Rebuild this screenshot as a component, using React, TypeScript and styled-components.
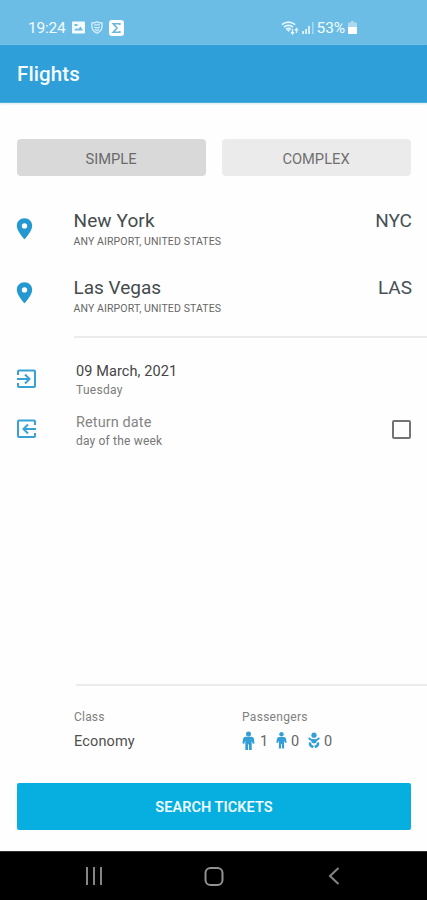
import React from 'react';
import styled, { createGlobalStyle } from 'styled-components';

const GlobalStyle = createGlobalStyle`
  * { box-sizing: border-box; }
  body { margin: 0; background: #fefefe; font-family: Roboto, sans-serif; }
  svg { display: block; flex: none; }
`;

const Screen = styled.div`
  width: 427px;
  height: 900px;
  display: flex;
  flex-direction: column;
  overflow: hidden;
  background: #fefefe;
`;

const StatusBar = styled.div`
  height: 45px;
  padding: 10px 70px 0 28px;
  display: flex;
  align-items: center;
  justify-content: space-between;
  background: #6cbde5;
  color: #f4fbff;
`;

const StatusGroup = styled.div<{ $gap: number }>`
  display: flex;
  align-items: center;
  gap: ${(p) => p.$gap}px;
`;

const Text = styled.span<{
  $size: number;
  $color?: string;
  $weight?: number;
  $spacing?: number;
  $line?: number;
}>`
  font-size: ${(p) => p.$size}px;
  font-weight: ${(p) => p.$weight ?? 400};
  color: ${(p) => p.$color ?? 'inherit'};
  letter-spacing: ${(p) => p.$spacing ?? 0}px;
  line-height: ${(p) => p.$line ?? 20}px;
  white-space: nowrap;
`;

const AppBar = styled.header`
  height: 58px;
  padding: 1px 17px 0;
  display: flex;
  align-items: center;
  background: #2e9fd8;
  color: #f5fcff;
  border-bottom: 1px solid #4fadda;
  box-shadow: 0 1px 2px #d9e6ec;
`;

const Main = styled.main`
  flex: 1;
  display: flex;
  flex-direction: column;
`;

const Tabs = styled.div`
  margin: 36px 16px 0 17px;
  height: 37px;
  display: grid;
  grid-template-columns: 1fr 1fr;
  gap: 16px;
`;

const Tab = styled.button<{ $active?: boolean }>`
  border: 0;
  border-radius: 4px;
  padding: 2px 1px 0 0;
  font-family: inherit;
  background: ${(p) => (p.$active ? '#d9d9d9' : '#ebebeb')};
  color: ${(p) => (p.$active ? '#6a6a6a' : '#707070')};
`;

const Places = styled.section`
  padding: 33px 15px 0 16px;
  display: grid;
  grid-auto-rows: 67px;
`;

const PlaceRow = styled.div`
  display: grid;
  grid-template-columns: 57.5px 1fr auto;
  align-items: start;
`;

const IconSlot = styled.div<{ $top: number }>`
  padding-top: ${(p) => p.$top}px;
`;

const Stack = styled.div`
  display: flex;
  flex-direction: column;
`;

const Divider = styled.hr<{ $top: number; $width: number }>`
  width: ${(p) => p.$width}px;
  height: 2px;
  border: 0;
  margin: ${(p) => p.$top}px 0 0 auto;
  background: #ececec;
`;

const Dates = styled.section`
  padding: 24px 16px 0 16px;
  display: grid;
  grid-auto-rows: 51px;
`;

const DateRow = styled.div`
  display: grid;
  grid-template-columns: 60px 1fr auto;
  align-items: start;
`;

const Checkbox = styled.div`
  width: 19px;
  height: 19px;
  margin-top: 7px;
  border: 2px solid #737373;
  border-radius: 2px;
`;

const Summary = styled.section`
  padding: 21px 0 0 74px;
  display: grid;
  grid-template-columns: 168px 1fr;
`;

const Counts = styled.div`
  display: flex;
  align-items: center;
  height: 30px;
`;

const Count = styled.div<{ $width: number; $gap: number }>`
  width: ${(p) => p.$width}px;
  display: flex;
  align-items: center;
  gap: ${(p) => p.$gap}px;
`;

const CountIcon = styled.div`
  margin-top: -3px;
`;

const SearchButton = styled.button`
  height: 47px;
  margin: auto 16px 21px 17px;
  padding: 2px 0 0;
  border: 0;
  border-radius: 2px;
  background: #06afdf;
  color: #effbff;
  font-family: inherit;
`;

const NavBar = styled.nav`
  height: 49px;
  border-top: 1px solid #303030;
  background: #000;
  display: grid;
  grid-template-columns: 120px 120px 120px;
  justify-content: center;
  align-items: center;
  justify-items: center;
`;

const Pin = () => (
  <svg width="17" height="22" viewBox="0 0 17 22">
    <path
      fill="#2499d1"
      fillRule="evenodd"
      d="M8.500.3C4.100.3.8 3.600.8 7.900.8 13 8.500 21.300 8.500 21.300S16.200 13 16.200 7.900C16.200 3.600 12.900.3 8.500.3Zm0 4.900a2.700 2.700 0 1 1 0 5.400 2.700 2.700 0 0 1 0-5.400Z"
    />
  </svg>
);

const Depart = () => (
  <svg width="21" height="20" viewBox="0 0 21 20" fill="none" stroke="#39a2d4" strokeWidth="2">
    <path d="M2 6V2.500Q2 1.500 3 1.500H18Q19 1.500 19 2.500V17Q19 18 18 18H3Q2 18 2 17V14" />
    <path d="M1 10H13M9 5.500L13.500 10L9 14.500" />
  </svg>
);

const Return = () => (
  <svg width="21" height="20" viewBox="0 0 21 20" fill="none" stroke="#39a2d4" strokeWidth="2">
    <path d="M19 6V2.500Q19 1.500 18 1.500H3Q2 1.500 2 2.500V17Q2 18 3 18H18Q19 18 19 17V14" />
    <path d="M20 10H8M12 5.500L7.500 10L12 14.500" />
  </svg>
);

const Adult = () => (
  <svg width="13" height="20" viewBox="0 0 13 20" fill="#32a0d6">
    <circle cx="6.500" cy="3" r="2.500" />
    <path d="M3.500 5.800h6q2 0 2.500 2.200l.5 4.500-1.800.3-1-3V19H7V13.500H6V19H3.300V9.800l-1 3-1.800-.3L1 8q.5-2.200 2.500-2.200Z" />
  </svg>
);

const Child = () => (
  <svg width="11" height="17" viewBox="0 0 11 17" fill="#32a0d6">
    <circle cx="5.500" cy="2.300" r="2.200" />
    <path d="M3 4.900h5q1.600 0 2 1.800l.7 3.800-1.600.4-1-2.500V16.500H6v-4.300H5v4.300H2.900V8.400l-1 2.500-1.600-.4L1 6.700q.4-1.800 2-1.800Z" />
  </svg>
);

const Infant = () => (
  <svg width="12" height="17" viewBox="0 0 12 17" fill="none" stroke="#32a0d6">
    <circle cx="6" cy="3.200" r="2.600" fill="#32a0d6" stroke="none" />
    <path d="M.6 6L3.800 8.200H8.200L11.400 6" strokeWidth="2" />
    <path d="M3.500 7.500H8.500V10.500L6 11.500L3.500 10.500Z" fill="#32a0d6" stroke="none" />
    <path d="M2.300 10.500Q.8 13.200 5.300 15.200M9.700 10.500Q11.200 13.200 6.700 15.200" strokeWidth="2.500" />
  </svg>
);

const PictureIcon = () => (
  <svg width="13" height="13" viewBox="0 0 13 13">
    <rect y=".5" width="13" height="12" rx="1" fill="#f4fbff" />
    <path d="M2 9.500L4.500 7L6 8.200L8.500 5.500L11 9.500Z" fill="#6cbde5" />
    <path d="M2.500 3h3v2h-3Z" fill="#6cbde5" />
  </svg>
);

const ShieldIcon = () => (
  <svg width="12" height="13" viewBox="0 0 13 14" fill="none" stroke="#d3edfa" strokeWidth="1.500">
    <path d="M1 2Q4 2 6.500.8Q9 2 12 2V6Q11.500 11 6.500 13Q1.500 11 1 6Z" />
    <path d="M3.300 4.200H9.700M3.500 6.500Q6.500 8 9.500 6.500M4.300 9L6.500 10.500L8.700 9" />
  </svg>
);

const SigmaIcon = () => (
  <svg width="15" height="16" viewBox="0 0 15 16">
    <rect width="15" height="16" rx="3" fill="#fbfeff" />
    <path d="M10.800 5V3.800H4.300L8 8L4.300 12.200H10.800V11" fill="none" stroke="#6cb5d9" strokeWidth="1.600" />
  </svg>
);

const WifiIcon = () => (
  <svg width="18" height="14" viewBox="0 0 18 14" fill="none" stroke="#e4f5fd" strokeWidth="1.700">
    <path d="M.8 3.600Q7.500-1.200 14.200 3.600M3 6Q7.500 2.700 12 6M5 8.200Q7.500 6.500 10 8.200" />
    <path d="M5.500 8.500H9.500L7.500 11Z" fill="#e4f5fd" stroke="none" />
    <path d="M11.500 8V13M10 11.200L11.500 13L13 11.200M15.500 12V7.500M14 9.300L15.500 7.500L17 9.300" strokeWidth="1.300" />
  </svg>
);

const SignalIcon = () => (
  <svg width="12" height="12" viewBox="0 0 12 12">
    <path d="M0 9h2v3H0ZM3 7h2v5H3ZM6 4h2v8H6Z" fill="#d6effb" />
    <path d="M10 0h1.500v12H10Z" fill="#a7d9f2" />
  </svg>
);

const BatteryIcon = () => (
  <svg width="9" height="13" viewBox="0 0 9 13">
    <path d="M3 0h3v1.500h2q1 0 1 1V7H0V2.500q0-1 1-1h2Z" fill="#add9ee" />
    <path d="M0 6h9v6q0 1-1 1H1q-1 0-1-1Z" fill="#fff" />
  </svg>
);

const places = [
  { city: 'New York', code: 'NYC', spacing: 0.1, pin: 9 },
  { city: 'Las Vegas', code: 'LAS', spacing: 0, pin: 6 },
];

export default function App() {
  return (
    <Screen>
      <GlobalStyle />
      <StatusBar>
        <StatusGroup $gap={6}>
          <Text $size={15.5} $spacing={-0.2}>19:24</Text>
          <PictureIcon />
          <ShieldIcon />
          <SigmaIcon />
        </StatusGroup>
        <StatusGroup $gap={3}>
          <WifiIcon />
          <SignalIcon />
          <Text $size={15.5} $spacing={-0.1}>53%</Text>
          <BatteryIcon />
        </StatusGroup>
      </StatusBar>
      <AppBar>
        <Text $size={20.5} $weight={500} $spacing={0.1} $line={26}>Flights</Text>
      </AppBar>
      <Main>
        <Tabs>
          <Tab $active><Text $size={14.7}>SIMPLE</Text></Tab>
          <Tab><Text $size={14.7}>COMPLEX</Text></Tab>
        </Tabs>
        <Places>
          {places.map((p) => (
            <PlaceRow key={p.code}>
              <IconSlot $top={p.pin}><Pin /></IconSlot>
              <Stack>
                <Text $size={19} $color="#454b4d" $spacing={p.spacing} $line={24}>{p.city}</Text>
                <Text $size={10.5} $color="#666" $spacing={0.12} $line={18}>ANY AIRPORT, UNITED STATES</Text>
              </Stack>
              <Text $size={19} $color="#465056" $line={24}>{p.code}</Text>
            </PlaceRow>
          ))}
        </Places>
        <Divider $top={-7} $width={353} />
        <Dates>
          <DateRow>
            <IconSlot $top={7}><Depart /></IconSlot>
            <Stack>
              <Text $size={14.5} $color="#454545" $spacing={0.1}>09 March, 2021</Text>
              <Text $size={12} $color="#7c7c7c" $spacing={0.3} $line={16}>Tuesday</Text>
            </Stack>
          </DateRow>
          <DateRow>
            <IconSlot $top={6}><Return /></IconSlot>
            <Stack>
              <Text $size={14.5} $color="#858585" $spacing={0.1}>Return date</Text>
              <Text $size={12} $color="#777" $spacing={0.18} $line={16}>day of the week</Text>
            </Stack>
            <Checkbox />
          </DateRow>
        </Dates>
        <Divider $top={220} $width={351} />
        <Summary>
          <Stack>
            <Text $size={12} $color="#808080" $spacing={0.2}>Class</Text>
            <Text $size={14.5} $color="#505050" $spacing={0.15} $line={30}>Economy</Text>
          </Stack>
          <Stack>
            <Text $size={12} $color="#808080" $spacing={0.3}>Passengers</Text>
            <Counts>
              <Count $width={34} $gap={5}><CountIcon><Adult /></CountIcon><Text $size={14.5} $color="#666">1</Text></Count>
              <Count $width={32} $gap={4}><CountIcon><Child /></CountIcon><Text $size={14.5} $color="#666">0</Text></Count>
              <Count $width={30} $gap={4}><CountIcon><Infant /></CountIcon><Text $size={14.5} $color="#666">0</Text></Count>
            </Counts>
          </Stack>
        </Summary>
        <SearchButton><Text $size={14.5} $weight={600} $spacing={0.05}>SEARCH TICKETS</Text></SearchButton>
      </Main>
      <NavBar>
        <svg width="18" height="18" viewBox="0 0 18 18" stroke="#858585" strokeWidth="2">
          <path d="M2 0V18M9 0V18M16 0V18" />
        </svg>
        <svg width="20" height="19" viewBox="0 0 20 19" fill="none" stroke="#929292" strokeWidth="2">
          <rect x="1.500" y="1" width="17" height="17" rx="5" />
        </svg>
        <svg width="12" height="18" viewBox="0 0 12 18" fill="none" stroke="#858585" strokeWidth="2">
          <path d="M10.500 1L2 9L10.500 17" />
        </svg>
      </NavBar>
    </Screen>
  );
}
